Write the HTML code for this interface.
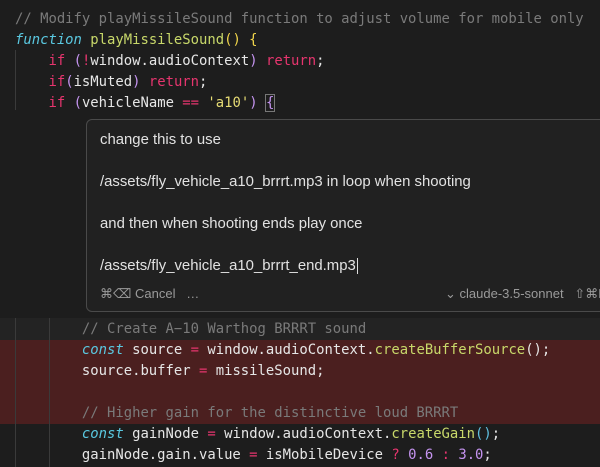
<!DOCTYPE html>
<html><head><style>
html,body{margin:0;padding:0;width:600px;height:467px;overflow:hidden;background:#1d1d1d}
.code{position:absolute;left:0;top:0;width:600px;font-family:"DejaVu Sans Mono","Liberation Mono",monospace;font-size:13.9px;color:#e6e6e6;white-space:pre}
.l{position:absolute;left:15px;height:21px;line-height:21px}
.c{color:#7a7a7a}.k{color:#5ac8e0;font-style:italic}.f{color:#c8d86a}.y{color:#f1d54b}.r{color:#e6356e}.p{color:#c594f0}.s{color:#e6db74}.g{color:#5fbfe0}
.guide{position:absolute;width:1px;background:#3a3a3a}
.pop{position:absolute;left:86px;top:119px;width:530px;height:191px;background:#212121;border:1px solid #4a4a4a;border-radius:6px;font-family:"Liberation Sans",Arial,sans-serif;color:#e2e2e2;font-size:14.9px}
.pop div{position:absolute;left:13px}
.ft{font-size:13px;color:#9a9a9a}
</style></head><body>
<div style="position:absolute;left:0;top:318px;width:600px;height:22px;background:#232323"></div>
<div style="position:absolute;left:0;top:340px;width:600px;height:84px;background:#4b1f1f"></div>
<div class="guide" style="left:15px;top:50px;height:60px"></div>
<div class="guide" style="left:15px;top:318px;height:149px"></div>
<div class="guide" style="left:49px;top:318px;height:149px"></div>
<div class="code">
<div class="l" style="top:9px"><span class="c">// Modify playMissileSound function to adjust volume for mobile only</span></div>
<div class="l" style="top:30px"><span class="k">function</span> <span class="f">playMissileSound</span><span class="y">() {</span></div>
<div class="l" style="top:51px">    <span class="r">if</span> <span class="p">(</span><span class="r">!</span>window.audioContext<span class="p">)</span> <span class="r">return</span>;</div>
<div class="l" style="top:72px">    <span class="r">if</span><span class="p">(</span>isMuted<span class="p">)</span> <span class="r">return</span>;</div>
<div class="l" style="top:93px">    <span class="r">if</span> <span class="p">(</span>vehicleName <span class="r">==</span> <span class="s">'a10'</span><span class="p">)</span> <span class="p" style="outline:1px solid #777">{</span></div>
<div class="l" style="top:319px">        <span class="c">// Create A−10 Warthog BRRRT sound</span></div>
<div class="l" style="top:340px">        <span class="k">const</span> source <span class="r">=</span> window.audioContext.<span class="f">createBufferSource</span>();</div>
<div class="l" style="top:361px">        source.buffer <span class="r">=</span> missileSound;</div>
<div class="l" style="top:403px">        <span class="c">// Higher gain for the distinctive loud BRRRT</span></div>
<div class="l" style="top:424px">        <span class="k">const</span> gainNode <span class="r">=</span> window.audioContext.<span class="f">createGain</span><span class="g">()</span>;</div>
<div class="l" style="top:445px">        gainNode.gain.value <span class="r">=</span> isMobileDevice <span class="r">?</span> <span class="p">0.6</span> <span class="r">:</span> <span class="p">3.0</span>;</div>
</div>
<div class="pop">
<div style="top:12px">change this to use</div>
<div style="top:54px">/assets/fly_vehicle_a10_brrrt.mp3 in loop when shooting</div>
<div style="top:96px">and then when shooting ends play once</div>
<div style="top:138px">/assets/fly_vehicle_a10_brrrt_end.mp3<span style="border-left:1px solid #ddd;margin-left:1px"></span></div>
<div class="ft" style="top:166px">⌘⌫ Cancel &nbsp;&nbsp;…</div>
<div class="ft" style="top:166px;left:358px">⌄ claude-3.5-sonnet &nbsp;&nbsp;⇧⌘K</div>
</div>
</body></html>
